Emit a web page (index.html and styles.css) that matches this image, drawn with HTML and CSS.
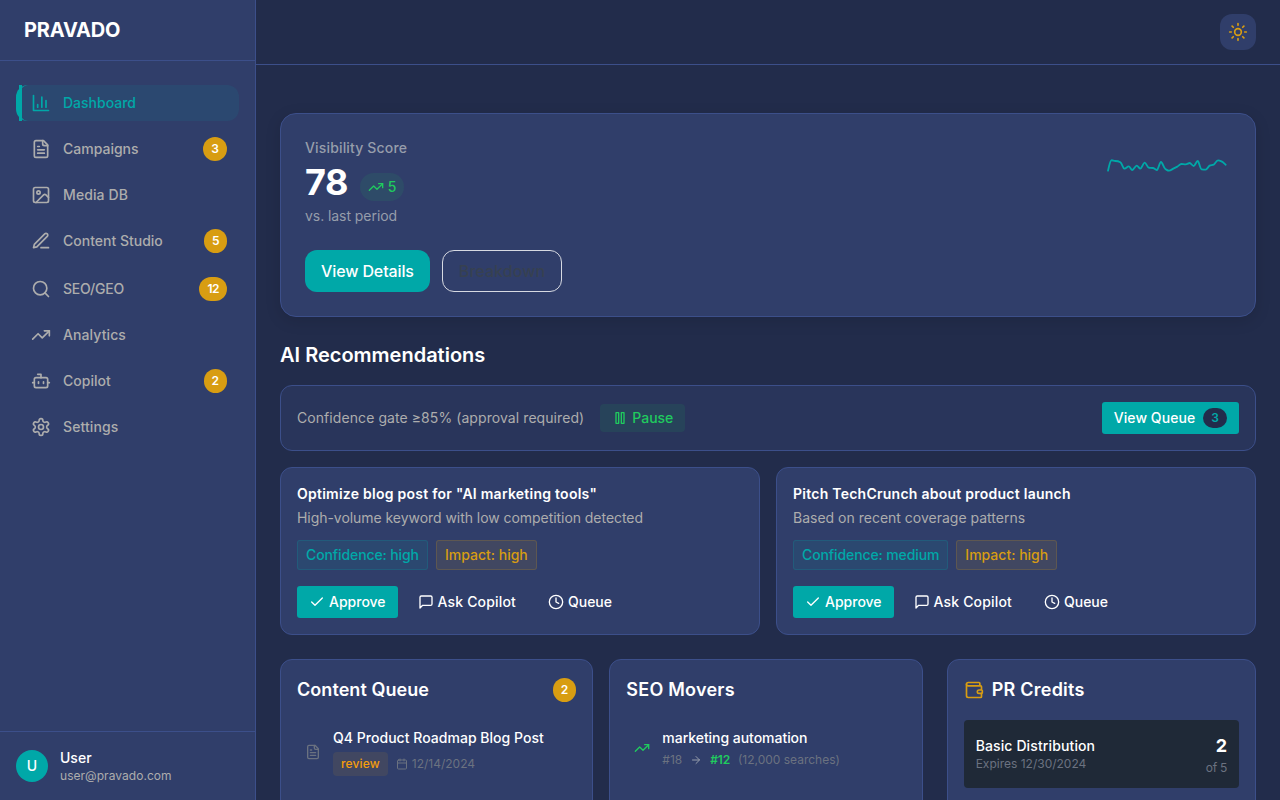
FILE: index.html
```html
<!DOCTYPE html>
<html lang="en">
<head>
<meta charset="utf-8">
<title>PRAVADO</title>
<link rel="stylesheet" href="styles.css">
</head>
<body>
<svg class="sprite" aria-hidden="true">
  <symbol id="chart" viewBox="0 0 24 24"><path d="M3 3v18h18M8 17v-3M13 17V5M18 17V9"/></symbol>
  <symbol id="file" viewBox="0 0 24 24"><path d="M15 2H6a2 2 0 0 0-2 2v16a2 2 0 0 0 2 2h12a2 2 0 0 0 2-2V7Z"/><path d="M14 2v4a2 2 0 0 0 2 2h4M10 9H8M16 13H8M16 17H8"/></symbol>
  <symbol id="image" viewBox="0 0 24 24"><rect x="3" y="3" width="18" height="18" rx="2"/><circle cx="9" cy="9" r="2"/><path d="m21 15-3.086-3.086a2 2 0 0 0-2.828 0L6 21"/></symbol>
  <symbol id="pen" viewBox="0 0 24 24"><path d="M12 20h9M16.500 3.500a2.121 2.121 0 0 1 3 3L7 19l-4 1 1-4Z"/></symbol>
  <symbol id="search" viewBox="0 0 24 24"><circle cx="11" cy="11" r="8"/><path d="m21 21-4.300-4.300"/></symbol>
  <symbol id="trend" viewBox="0 0 24 24"><path d="M22 7 13.500 15.500 8.500 10.500 2 17"/><path d="M16 7h6v6"/></symbol>
  <symbol id="bot" viewBox="0 0 24 24"><path d="M12 8V4H8"/><rect x="4" y="8" width="16" height="12" rx="2"/><path d="M2 14h2M20 14h2M15 13v2M9 13v2"/></symbol>
  <symbol id="gear" viewBox="0 0 24 24"><path d="M12.220 2h-.44a2 2 0 0 0-2 2v.18a2 2 0 0 1-1 1.730l-.43.25a2 2 0 0 1-2 0l-.15-.08a2 2 0 0 0-2.730.73l-.22.38a2 2 0 0 0 .73 2.730l.15.1a2 2 0 0 1 1 1.720v.51a2 2 0 0 1-1 1.740l-.15.09a2 2 0 0 0-.73 2.730l.22.38a2 2 0 0 0 2.730.73l.15-.08a2 2 0 0 1 2 0l.43.25a2 2 0 0 1 1 1.730V20a2 2 0 0 0 2 2h.44a2 2 0 0 0 2-2v-.18a2 2 0 0 1 1-1.730l.43-.25a2 2 0 0 1 2 0l.15.08a2 2 0 0 0 2.730-.73l.22-.39a2 2 0 0 0-.73-2.730l-.15-.08a2 2 0 0 1-1-1.740v-.5a2 2 0 0 1 1-1.740l.15-.09a2 2 0 0 0 .73-2.730l-.22-.38a2 2 0 0 0-2.730-.73l-.15.08a2 2 0 0 1-2 0l-.43-.25a2 2 0 0 1-1-1.730V4a2 2 0 0 0-2-2z"/><circle cx="12" cy="12" r="3"/></symbol>
  <symbol id="sun" viewBox="0 0 24 24"><circle cx="12" cy="12" r="4"/><path d="M12 2v2M12 20v2M4.930 4.930l1.410 1.410M17.660 17.660l1.410 1.410M2 12h2M20 12h2M6.340 17.660l-1.410 1.410M19.070 4.930l-1.410 1.410"/></symbol>
  <symbol id="pause" viewBox="0 0 24 24"><rect x="6" y="4" width="4" height="16"/><rect x="14" y="4" width="4" height="16"/></symbol>
  <symbol id="check" viewBox="0 0 24 24"><path d="M20 6 9 17l-5-5"/></symbol>
  <symbol id="chat" viewBox="0 0 24 24"><path d="M21 15a2 2 0 0 1-2 2H7l-4 4V5a2 2 0 0 1 2-2h14a2 2 0 0 1 2 2z"/></symbol>
  <symbol id="clock" viewBox="0 0 24 24"><circle cx="12" cy="12" r="10"/><path d="M12 6v6l4 2"/></symbol>
  <symbol id="calendar" viewBox="0 0 24 24"><path d="M8 2v4M16 2v4M3 10h18"/><rect x="3" y="4" width="18" height="18" rx="2"/></symbol>
  <symbol id="arrow" viewBox="0 0 24 24"><path d="M5 12h14M12 5l7 7-7 7"/></symbol>
  <symbol id="wallet" viewBox="0 0 24 24"><path d="M19 7V4a1 1 0 0 0-1-1H5a2 2 0 0 0 0 4h15a1 1 0 0 1 1 1v4h-3a2 2 0 0 0 0 4h3a1 1 0 0 0 1-1v-2a1 1 0 0 0-1-1"/><path d="M3 5v14a2 2 0 0 0 2 2h15a1 1 0 0 0 1-1v-4"/></symbol>
</svg>
<div class="app">
  <aside class="sidebar">
    <div class="brand">PRAVADO</div>
    <nav class="nav">
      <a class="nav-item active"><svg class="icon"><use href="#chart"/></svg><span class="nav-label">Dashboard</span></a>
      <a class="nav-item"><svg class="icon"><use href="#file"/></svg><span class="nav-label">Campaigns</span><span class="badge">3</span></a>
      <a class="nav-item"><svg class="icon"><use href="#image"/></svg><span class="nav-label wide">Media DB</span></a>
      <a class="nav-item"><svg class="icon"><use href="#pen"/></svg><span class="nav-label">Content Studio</span><span class="badge narrow">5</span></a>
      <a class="nav-item"><svg class="icon"><use href="#search"/></svg><span class="nav-label tight">SEO/GEO</span><span class="badge narrow">12</span></a>
      <a class="nav-item"><svg class="icon"><use href="#trend"/></svg><span class="nav-label wide">Analytics</span></a>
      <a class="nav-item"><svg class="icon"><use href="#bot"/></svg><span class="nav-label">Copilot</span><span class="badge">2</span></a>
      <a class="nav-item"><svg class="icon"><use href="#gear"/></svg><span class="nav-label wide">Settings</span></a>
    </nav>
    <div class="profile">
      <div class="avatar">U</div>
      <div><div class="profile-name">User</div><div class="profile-mail">user@pravado.com</div></div>
    </div>
  </aside>
  <div class="page">
    <header class="topbar"><button class="theme"><svg class="icon"><use href="#sun"/></svg></button></header>
    <main class="main">
      <section class="card hero">
        <div class="hero-top">
          <div>
            <div class="hero-label">Visibility Score</div>
            <div class="score-row"><span class="score">78</span><span class="delta"><svg class="icon small"><use href="#trend"/></svg>5</span></div>
            <div class="hero-note">vs. last period</div>
          </div>
          <svg class="spark" viewBox="75 414 378 180"><path d="M84 512C87 500 90 482 94 481S101 483 106 483S116 484 121 487S129 505 133 506S142 499 146 499S153 510 157 510S166 497 170 497S177 506 181 506S190 488 194 488S202 502 206 503S214 503 219 504S228 510 231 510S239 486 243 486S251 504 256 507S263 512 267 512S276 508 280 506S288 502 292 500S300 492 304 492S312 493 317 493S325 489 329 489S337 498 341 498S349 483 353 483S360 507 365 508S373 509 377 509S385 499 389 497S397 496 401 494S409 481 414 481S422 483 426 485S433 491 437 494"/></svg>
        </div>
        <div class="hero-actions"><button class="btn-lg">View Details</button><button class="btn-lg outline">Breakdown</button></div>
      </section>
      <h2 class="section-title">AI Recommendations</h2>
      <section class="gate">
        <span class="gate-text">Confidence gate ≥85% (approval required)</span>
        <button class="pause"><svg class="icon small"><use href="#pause"/></svg>Pause</button>
        <button class="btn queue">View Queue<span class="queue-count">3</span></button>
      </section>
      <div class="recs">
        <article class="card rec">
          <h3 class="rec-title">Optimize blog post for "AI marketing tools"</h3>
          <p class="rec-text snug">High-volume keyword with low competition detected</p>
          <div class="row tags"><span class="tag">Confidence: high</span><span class="tag amber">Impact: high</span></div>
          <div class="row"><button class="btn"><svg class="icon small"><use href="#check"/></svg>Approve</button><button class="btn ghost ask"><svg class="icon small"><use href="#chat"/></svg>Ask Copilot</button><button class="btn ghost"><svg class="icon small"><use href="#clock"/></svg>Queue</button></div>
        </article>
        <article class="card rec">
          <h3 class="rec-title">Pitch TechCrunch about product launch</h3>
          <p class="rec-text">Based on recent coverage patterns</p>
          <div class="row tags"><span class="tag">Confidence: medium</span><span class="tag amber">Impact: high</span></div>
          <div class="row"><button class="btn"><svg class="icon small"><use href="#check"/></svg>Approve</button><button class="btn ghost ask"><svg class="icon small"><use href="#chat"/></svg>Ask Copilot</button><button class="btn ghost"><svg class="icon small"><use href="#clock"/></svg>Queue</button></div>
        </article>
      </div>
      <div class="panels">
        <div class="panel-pair">
          <section class="card panel">
            <div class="panel-head"><h3 class="panel-title">Content Queue</h3><span class="badge">2</span></div>
            <div class="item">
              <svg class="icon small muted"><use href="#file"/></svg>
              <div><div class="item-title">Q4 Product Roadmap Blog Post</div>
                <div class="meta"><span class="review">review</span><span class="date"><svg class="icon tiny"><use href="#calendar"/></svg>12/14/2024</span></div></div>
            </div>
          </section>
          <section class="card panel">
            <div class="panel-head"><h3 class="panel-title wide">SEO Movers</h3></div>
            <div class="item">
              <svg class="icon small green"><use href="#trend"/></svg>
              <div><div class="item-title snug">marketing automation</div>
                <div class="meta"><span>#18</span><svg class="icon tiny arrow"><use href="#arrow"/></svg><span class="rank">#12</span><span>(12,000 searches)</span></div></div>
            </div>
          </section>
        </div>
        <section class="card panel">
          <div class="panel-head credits-head"><svg class="icon wallet"><use href="#wallet"/></svg><h3 class="panel-title wide">PR Credits</h3></div>
          <div class="credit">
            <div><div class="item-title wide">Basic Distribution</div><div class="credit-note">Expires 12/30/2024</div></div>
            <div class="credit-side"><div class="credit-count">2</div><div class="credit-note snug">of 5</div></div>
          </div>
        </section>
      </div>
    </main>
  </div>
</div>
</body>
</html>
```

FILE: styles.css
```css
:root {
  --bg: #222c4b;
  --card: #303e6a;
  --line: #3c4f8a;
  --teal: #00a8a8;
  --amber: #d89d12;
  --green: #20cb5e;
  --text: #adadad;
  --muted: #6b7280;
}
* { box-sizing: border-box; }
body {
  margin: 0;
  background: var(--bg);
  color: #fff;
  font: 14px/20px Inter, sans-serif;
  overflow: hidden;
}
h2, h3, p { margin: 0; }
button { border: 0; color: inherit; font: inherit; padding: 0; }
.sprite { display: none; }
.icon {
  width: 20px;
  height: 20px;
  flex: none;
  fill: none;
  stroke: currentColor;
  stroke-width: 2;
  stroke-linecap: round;
  stroke-linejoin: round;
}
.small { width: 16px; height: 16px; }
.tiny { width: 12px; height: 12px; }
.muted { color: var(--muted); }
.green { color: var(--green); }

.app { display: flex; height: 800px; overflow: hidden; }
.sidebar {
  width: 256px;
  flex: none;
  display: flex;
  flex-direction: column;
  background: var(--card);
  border-right: 1px solid var(--line);
}
.brand {
  height: 61px;
  padding: 16px 24px;
  border-bottom: 1px solid var(--line);
  font-size: 20px;
  font-weight: 700;
  line-height: 28px;
  letter-spacing: -.18px;
}
.nav { flex: 1; display: flex; flex-direction: column; gap: 8px; padding: 24px 16px; }
.nav-item {
  position: relative;
  display: flex;
  align-items: center;
  gap: 12px;
  padding: 8px 12px;
  border-left: 3px solid transparent;
  border-radius: 12px;
  color: var(--text);
  font-weight: 500;
}
.nav-label { flex: 1; }
.nav-label.wide { letter-spacing: .1px; }
.nav-label.tight { letter-spacing: -.2px; }
.nav-item.active { color: var(--teal); background: rgba(0, 168, 168, .1); border-left-color: var(--teal); }
.nav-item.active::before {
  content: "";
  position: absolute;
  left: 0;
  top: 0;
  bottom: 0;
  width: 3px;
  background: var(--teal);
}
.badge {
  padding: 4px 8px;
  border-radius: 12px;
  background: var(--amber);
  color: #fff;
  font-size: 12px;
  font-weight: 600;
  line-height: 16px;
}
.badge.narrow { letter-spacing: -.5px; }
.profile { display: flex; align-items: center; gap: 12px; padding: 16px; border-top: 1px solid var(--line); }
.avatar { width: 32px; height: 32px; border-radius: 50%; background: var(--teal); text-align: center; line-height: 32px; font-weight: 500; }
.profile-name { font-weight: 500; }
.profile-mail { color: var(--text); font-size: 12px; line-height: 16px; letter-spacing: .04px; }

.page { flex: 1; min-width: 0; }
.topbar { height: 65px; display: flex; justify-content: flex-end; align-items: center; padding: 0 24px; border-bottom: 1px solid var(--line); }
.theme { width: 36px; height: 36px; display: grid; place-items: center; border-radius: 12px; background: var(--card); color: var(--amber); }
.main { padding: 48px 24px 0; }
.card { background: var(--card); border: 1px solid var(--line); border-radius: 12px; }
.hero { padding: 24px; border-radius: 16px; box-shadow: 0 4px 16px rgba(0, 0, 0, .12); }
.hero-top { display: flex; justify-content: space-between; align-items: flex-start; }
.hero-label { color: #969dab; font-weight: 500; letter-spacing: .16px; }
.score-row { display: flex; align-items: baseline; gap: 12px; height: 40px; margin: 4px 0; }
.score { font-size: 36px; line-height: 40px; font-weight: 700; letter-spacing: -.5px; }
.delta {
  display: flex;
  align-items: center;
  gap: 4px;
  padding: 4px 8px 4px 8px;
  border-radius: 14px;
  background: rgba(33, 197, 93, .1);
  color: var(--green);
  font-weight: 500;
  letter-spacing: -.6px;
}
.hero-note { color: #969dab; letter-spacing: -.06px; }
.spark { width: 126px; height: 60px; fill: none; stroke: var(--teal); stroke-width: 5.5; stroke-linecap: round; }
.hero-actions { display: flex; gap: 12px; margin-top: 24px; }
.btn-lg { height: 42px; padding: 0 16px; border-radius: 12px; background: var(--teal); font-size: 16px; font-weight: 500; letter-spacing: -.12px; }
.btn-lg.outline { background: none; border: 1px solid #d7dae2; color: #374151; letter-spacing: .06px; }

.section-title { margin: 24px 0 16px; font-size: 20px; line-height: 28px; font-weight: 600; }
.gate { display: flex; align-items: center; gap: 16px; padding: 16px; border: 1px solid var(--line); border-radius: 12px; background: #29355b; }
.gate-text { color: var(--text); letter-spacing: .075px; }
.pause { display: flex; align-items: center; gap: 4px; padding: 4px 12px; border-radius: 4px; background: rgba(33, 197, 93, .1); color: var(--green); font-weight: 500; }
.btn { display: flex; align-items: center; gap: 4px; height: 32px; padding: 0 12px; border-radius: 3px; background: var(--teal); font-weight: 500; }
.btn.ghost { background: none; }
.btn.ask { letter-spacing: .16px; }
.btn.queue { gap: 8px; margin-left: auto; letter-spacing: .07px; }
.queue-count { padding: 2px 8px; border-radius: 10px; background: var(--bg); color: var(--teal); font-size: 12px; font-weight: 600; line-height: 16px; }

.recs { display: grid; grid-template-columns: 1fr 1fr; gap: 16px; margin: 16px 0 24px; }
.rec { padding: 16px; }
.rec-title { font-size: 14px; font-weight: 600; line-height: 20px; letter-spacing: .25px; }
.rec-text { margin-top: 4px; color: var(--text); }
.rec-text.snug { letter-spacing: -.05px; }
.row { display: flex; gap: 8px; }
.tags { margin: 12px 0 16px; }
.tag { padding: 4px 8px; border: 1px solid rgba(0, 168, 168, .2); border-radius: 3px; background: rgba(0, 168, 168, .1); color: var(--teal); font-weight: 500; letter-spacing: -.11px; }
.tag.amber { border-color: rgba(216, 157, 18, .2); background: rgba(216, 157, 18, .1); color: var(--amber); letter-spacing: 0; }

.panels { display: grid; grid-template-columns: calc((100% - 48px) / 3 * 2 + 24px) 1fr; gap: 24px; }
.panel-pair { display: grid; grid-template-columns: 1fr 1fr; gap: 16px; }
.panel { height: 320px; padding: 16px; }
.panel-head { display: flex; align-items: center; justify-content: space-between; height: 28px; margin-bottom: 16px; }
.credits-head { justify-content: flex-start; gap: 8px; }
.panel-title { font-size: 18px; line-height: 28px; font-weight: 600; letter-spacing: .06px; }
.panel-title.wide { letter-spacing: .24px; }
.wallet { color: var(--amber); }
.item { display: flex; align-items: center; gap: 12px; padding: 8px; }
.item-title { font-weight: 500; letter-spacing: .03px; }
.item-title.wide { letter-spacing: .12px; }
.item-title.snug { letter-spacing: -.04px; }
.meta { display: flex; align-items: center; gap: 8px; margin-top: 4px; color: var(--muted); font-size: 12px; line-height: 16px; }
.review { padding: 4px 8px; border-radius: 4px; background: rgba(216, 157, 18, .1); color: #f59e0b; font-weight: 500; letter-spacing: .14px; }
.date { display: flex; align-items: center; gap: 4px; }
.arrow { color: #969dab; }
.rank { color: var(--green); font-weight: 600; letter-spacing: -.2px; }
.credit { display: flex; align-items: center; justify-content: space-between; padding: 12px; border-radius: 4px; background: #1f2937; }
.credit-note { color: var(--muted); font-size: 12px; line-height: 16px; }
.credit-note.snug { letter-spacing: -.25px; }
.credit-side { text-align: right; }
.credit-count { font-size: 18px; line-height: 28px; font-weight: 700; }
```
